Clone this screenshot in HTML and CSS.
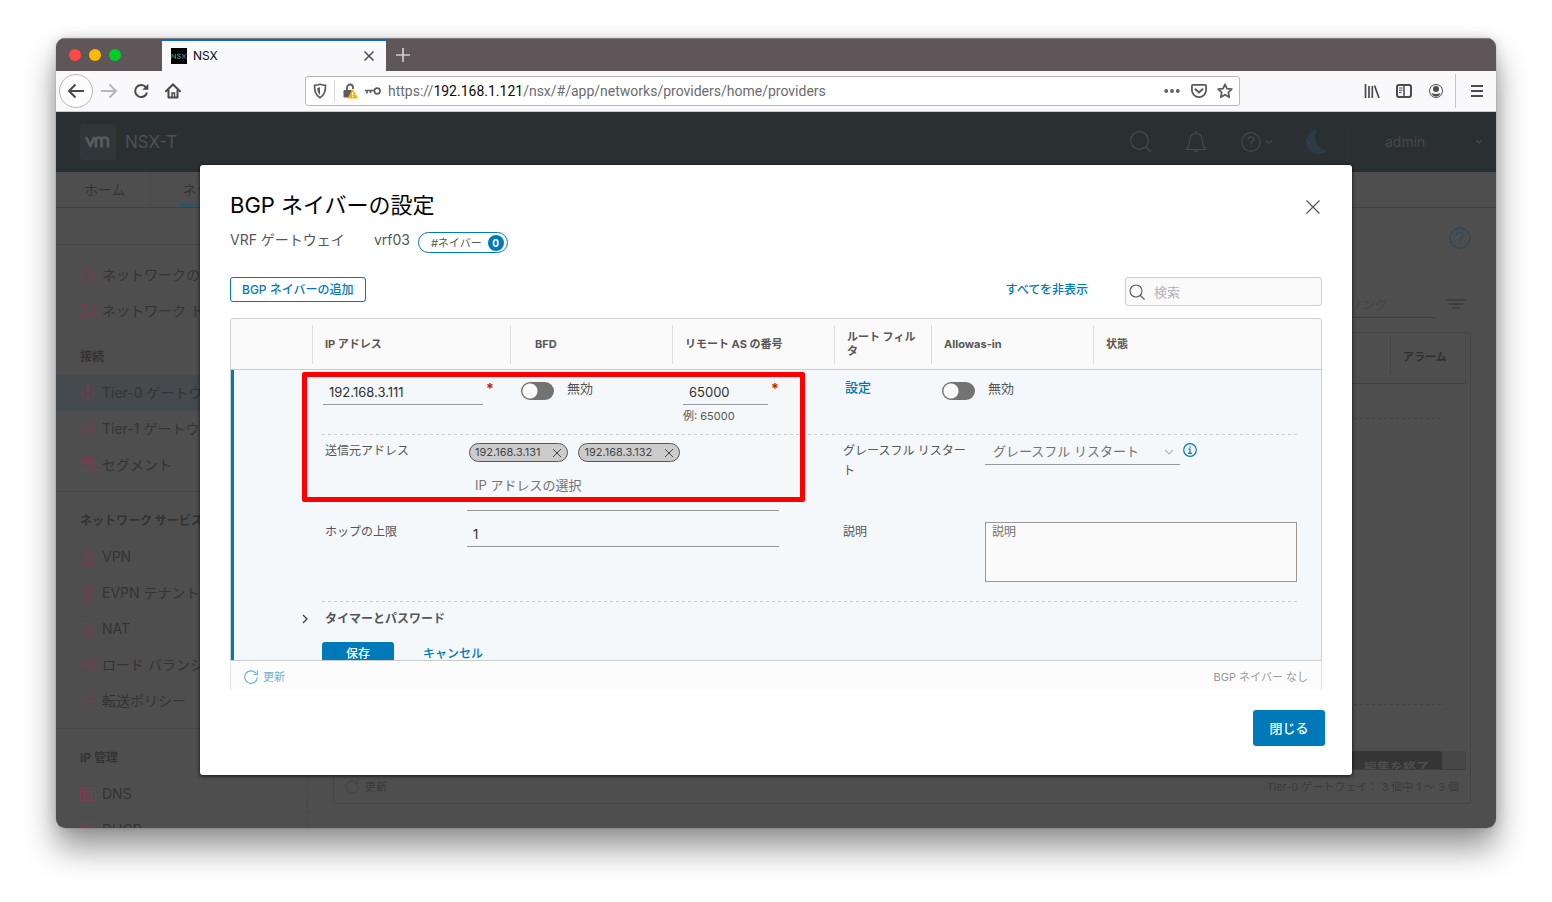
FILE: index.html
```html
<!DOCTYPE html>
<html lang="ja">
<head>
<meta charset="utf-8">
<title>NSX</title>
<link rel="stylesheet" href="styles.css">
</head>
<body>
<div class="window">
  <div class="titlebar">
    <div class="lights"><span class="light red"></span><span class="light yellow"></span><span class="light green"></span></div>
    <div class="browser-tab">
      <svg class="favicon" width="16" height="16" viewBox="0 0 16 16" aria-hidden="true"><rect width="16" height="16"/><g fill="none" stroke-width="1"><path stroke="#2f8f6a" d="M1 10.500V6l3.500 4.500V6"/><path stroke="#3fa7a0" d="M9.500 6.500C8 5.500 6.300 6.200 6.500 7.300c.2 1 2.900.7 3 2 .1 1.200-2 1.600-3.400.6"/><path stroke="#3c7fb5" d="M11 6l4 4.700M15 6l-4 4.700"/></g></svg>
      <span class="tab-title">NSX</span>
      <button class="icon-btn" aria-label="タブを閉じる"><svg width="12" height="12" viewBox="0 0 12 12"><path d="M1.500 1.500l9 9M10.500 1.500l-9 9" stroke="#4a4a4f" stroke-width="1.500" fill="none"/></svg></button>
    </div>
    <button class="icon-btn new-tab" aria-label="新しいタブ"><svg width="16" height="16" viewBox="0 0 16 16"><path d="M8 1v14M1 8h14" stroke="#d0cdce" stroke-width="1.700"/></svg></button>
  </div>

  <div class="toolbar">
    <button class="icon-btn back" aria-label="戻る"><svg width="18" height="16" viewBox="0 0 18 16"><path d="M17 8H2M8.500 1.500L2 8l6.500 6.500" stroke="#4a4a4f" stroke-width="2" fill="none"/></svg></button>
    <button class="icon-btn nav" aria-label="進む"><svg width="18" height="16" viewBox="0 0 18 16"><path d="M1 8h15M9.500 1.500L16 8l-6.500 6.500" stroke="#b7b7ba" stroke-width="2" fill="none"/></svg></button>
    <button class="icon-btn nav" aria-label="再読み込み"><svg width="16" height="16" viewBox="0 0 16 16"><path d="M13 4.500A6 6 0 1 0 14 9.500" stroke="#4a4a4f" stroke-width="2" fill="none"/><path d="M15.300.8v6h-6z" fill="#4a4a4f"/></svg></button>
    <button class="icon-btn nav" aria-label="ホーム"><svg width="16" height="16" viewBox="0 0 16 16" fill="none" stroke="#4a4a4f" stroke-width="2"><path d="M1 8.300L8 1.500l7 6.800" stroke-linecap="round"/><path d="M3.500 7v7.500h9V7" stroke-linejoin="round"/><path d="M7 14v-4h2.500v4" stroke-width="1.500"/></svg></button>

    <div class="urlbar">
      <svg width="14" height="16" viewBox="0 0 14 16"><path d="M7 1.300c2 .8 3.700 1 5.500 1C12.700 9 11 12.500 7 14.800 3 12.500 1.300 9 1.500 2.300c1.800 0 3.500-.2 5.500-1z" fill="none" stroke="#5c5c61" stroke-width="1.700"/><path d="M7 4v8c-1.800-1.500-2.700-3.600-2.800-7 1-.1 1.900-.4 2.800-1z" fill="#5c5c61"/></svg>
      <span class="url-sep"></span>
      <svg width="16" height="16" viewBox="0 0 16 16"><path d="M5 8V4.500a3 3 0 0 1 6 0V6" fill="none" stroke="#5c5c61" stroke-width="1.800"/><rect x="1.500" y="7" width="8.500" height="7.500" rx="1.200" fill="#5c5c61"/><path d="M10.700 6L16 15.500H5.400z" fill="#ffb100"/><path d="M10.700 9.200v3M10.700 13v1.300" stroke="#fff" stroke-width="1.200"/></svg>
      <svg width="16" height="16" viewBox="0 0 16 16" fill="none" stroke="#5c5c61" stroke-width="1.700"><circle cx="12.200" cy="8" r="2.800"/><path d="M9.400 7.500H0M2 8v2.500M5.500 8v2"/></svg>
      <p class="url">https://<b>192.168.1.121</b>/nsx/#/app/networks/providers/home/providers</p>
      <svg width="18" height="16" viewBox="0 0 18 16" fill="#5c5c61"><circle cx="3.200" cy="8" r="1.900"/><circle cx="9" cy="8" r="1.900"/><circle cx="14.800" cy="8" r="1.900"/></svg>
      <svg width="16" height="16" viewBox="0 0 16 16" fill="none" stroke="#5c5c61" stroke-width="1.800"><path d="M2 1.900h12q1.100 0 1.100 1.100v4a7.100 7.100 0 0 1-14.200 0V3Q.9 1.900 2 1.900z"/><path d="M4.500 6.200L8 9.500l3.500-3.300" stroke-linecap="round" stroke-width="2"/></svg>
      <svg width="16" height="16" viewBox="0 0 16 16"><path d="M8 1.300l2 4.300 4.800.6-3.500 3.200.9 4.700L8 11.800l-4.200 2.300.9-4.700L1.200 6.200 6 5.600z" fill="none" stroke="#5c5c61" stroke-width="1.800" stroke-linejoin="round"/></svg>
    </div>

    <button class="icon-btn nav" aria-label="ライブラリ"><svg width="16" height="16" viewBox="0 0 16 16" stroke="#4a4a4f" stroke-width="1.700"><path d="M1.500 1v14M5 3v12M8.300 3v12M10.500 2.500L15 15"/></svg></button>
    <button class="icon-btn nav" aria-label="サイドバー"><svg width="16" height="16" viewBox="0 0 16 16" fill="none" stroke="#4a4a4f"><rect x="1" y="2" width="14" height="12" rx="2" stroke-width="2"/><path d="M8 2v12" stroke-width="1.500"/><path d="M3 5h3.500M3 7.200h3.500M3 9.400h2.500"/></svg></button>
    <button class="icon-btn nav" aria-label="アカウント"><svg width="16" height="16" viewBox="0 0 16 16"><circle cx="8" cy="8" r="6.500" fill="none" stroke="#4a4a4f" stroke-width="1"/><circle cx="8" cy="6" r="3" fill="#4a4a4f"/><path d="M3.300 10q4.700 2 9.400 0-1.500 3.500-4.700 3.500T3.300 10z" fill="#4a4a4f"/></svg></button>
    <span class="bar-sep"></span>
    <button class="icon-btn menu" aria-label="メニュー"><svg width="14" height="14" viewBox="0 0 14 14"><path d="M1 2h12M1 7h12M1 12h12" stroke="#4a4a4f" stroke-width="2"/></svg></button>
  </div>

  <div class="app">
    <header class="app-header">
      <svg width="36" height="36" viewBox="0 0 36 36" aria-label="vm"><rect width="36" height="36" rx="3" fill="#30363a"/><path d="M6.500 14l3.800 8L14 14M16 22.500V16q.2-2.500 2.700-2.500 2.800 0 2.800 2.700v6.300M21.500 16.200q.2-2.700 3-2.700 3.500 0 3.500 2.700v6.300" fill="none" stroke="#575b5d" stroke-width="2.700" stroke-linecap="round" stroke-linejoin="round"/></svg>
      <span class="product">NSX-T</span>
      <div class="header-tools">
        <svg width="24" height="24" viewBox="0 0 24 24" fill="none" stroke="#464a4c" stroke-width="1.200"><circle cx="10.500" cy="10.500" r="8.800"/><path d="M17 17l5 5"/></svg>
        <svg width="24" height="24" viewBox="0 0 24 24" fill="none" stroke="#464a4c" stroke-width="1.200"><path d="M2.500 19.500h19q-3-3-3-7.500 0-8.500-6.500-8.500T5.500 12q0 4.500-3 7.500zM12 3.500V1"/><path d="M10 20.500q2 2.500 4 0" fill="#464a4c"/></svg>
        <svg width="34" height="24" viewBox="0 0 34 24" fill="none" stroke="#464a4c" stroke-width="1.200"><circle cx="12" cy="12" r="9.300"/><path d="M9 9.700q.2-2.900 3-2.900t3 2.500c0 2-3 2-3 4.500M12 15.500V17M27 10.500l3 3 3-3"/></svg>
        <svg width="24" height="24" viewBox="0 0 24 24"><path d="M13 0A12 12 0 1 0 23 20 13 13 0 0 1 13 0z" fill="#2c3c47"/></svg>
      </div>
      <div class="user"><span>admin</span><svg width="8" height="6" viewBox="0 0 8 6"><path d="M1 1l3 3 3-3" fill="none" stroke="#46494b" stroke-width="1.300"/></svg></div>
    </header>

    <nav class="tabs"><a class="tab" href="#home">ホーム</a><a class="tab active" href="#network">ネットワーク</a></nav>

    <div class="workspace">
      <nav class="sidebar">
        <div class="side-group first">
          <a class="side-item" href="#n"><svg class="side-icon" viewBox="0 0 16 16"><path d="M3 14a7 7 0 1 1 10 0zM8 10l3-4M3 8h1M8 3.500v1M12 8h1"/><circle cx="8" cy="10" r="1"/></svg>ネットワークの概要</a>
          <a class="side-item" href="#n"><svg class="side-icon" viewBox="0 0 16 16"><path d="M5 13l-4 2V2l4-1 5 2 5-1v12M5 1v12l2 .5M10 3v2"/><circle cx="9.500" cy="9" r="3"/><path d="M11.500 11.500L15 15"/></svg>ネットワーク トポロジ</a>
          <h2 class="side-title spaced">接続</h2>
          <a class="side-item selected" href="#n"><svg class="side-icon" viewBox="0 0 16 16"><circle cx="8" cy="8" r="7"/><circle cx="8" cy="8" r="2"/><path d="M8 1.500v3M8 11.500v3M2 8h2.500M11.500 8H14M6.500 3L8 4.500 9.500 3M6.500 13L8 11.500 9.500 13"/></svg>Tier-0 ゲートウェイ</a>
          <a class="side-item" href="#n"><svg class="side-icon" viewBox="0 0 16 16"><circle cx="8" cy="8" r="7"/><path d="M7 6.500L8 6v4M8 1.500v2.500M8 12v2.500M2 8h3M11 8h3M4 7v2M12 7v2"/></svg>Tier-1 ゲートウェイ</a>
          <a class="side-item" href="#n"><svg class="side-icon" viewBox="0 0 16 16"><path d="M4 1.500h8M2 3.500h12M1.500 6h13v8.500h-13zM4 9h7l-1.500-1.500M12 12H5l1.500 1.500"/></svg>セグメント</a>
        </div>
        <div class="side-group">
          <h2 class="side-title">ネットワーク サービス</h2>
          <a class="side-item" href="#n"><svg class="side-icon" viewBox="0 0 16 16"><circle cx="8" cy="7" r="6.500"/><path d="M5 6.500h6V10H5zM6.300 6.500v-2q1.700-2 3.400 0v2M8 7.500V9M3 15.500h10"/></svg>VPN</a>
          <a class="side-item" href="#n"><svg class="side-icon" viewBox="0 0 16 16"><circle cx="8" cy="7" r="6"/><path d="M3.500 4L12 11M12.500 3.500L4 11M4 11q0-6 8.500-7.500M3.500 4q6 0 8.500 7M4 15.500h9"/></svg>EVPN テナント</a>
          <a class="side-item" href="#n"><svg class="side-icon" viewBox="0 0 16 16"><path d="M0 2.500h2M4 2.500h5v11H4M0 13.500h2M0 8h2M4 8h11M12.500 5.500L15 8l-2.500 2.500"/></svg>NAT</a>
          <a class="side-item" href="#n"><svg class="side-icon" viewBox="0 0 16 16"><circle cx="3.500" cy="8" r="2.500"/><circle cx="13" cy="3" r="1.500"/><circle cx="13" cy="8" r="1.500"/><circle cx="13" cy="13" r="1.500"/><path d="M6 7l5.500-3.500M6 8h5.500M6 9l5.500 3.500"/></svg>ロード バランシング</a>
          <a class="side-item" href="#n"><svg class="side-icon" viewBox="0 0 16 16"><path d="M10 4L8 1.500 1.500 8 8 14.500l2-2.500M8 5v6M8 8h7M12.500 5.500L15 8l-2.500 2.500"/></svg>転送ポリシー</a>
        </div>
        <div class="side-group">
          <h2 class="side-title">IP 管理</h2>
          <a class="side-item" href="#n"><svg class="side-icon" viewBox="0 0 16 16"><path d="M.5 1.500h15v13H.5zM4.500 1.500v13M11.500 1.500v13M4.500 4h7M4.500 6h7M4.500 8h7M4.500 10h7M4.500 12h7M2 5h1M2 8h1M2 11h1M13 5h1M13 8h1M13 11h1"/></svg>DNS</a>
          <a class="side-item" href="#n"><svg class="side-icon" viewBox="0 0 16 16"><rect x=".5" y="1.500" width="15" height="12" rx="1.500"/><path d="M3 5h10v5H3z"/></svg>DHCP</a>
        </div>
      </nav>
      <main class="main">
        <div class="help-row"><svg width="22" height="22" viewBox="0 0 22 22" fill="none" stroke="#2c4a5a" stroke-width="1.400"><circle cx="11" cy="11" r="10"/><path d="M7.700 8.500Q8 5.500 11 5.500t3.200 2.700C14.200 10.500 11 10.500 11 13.500M11 15v1.500"/></svg></div>
        <div class="filter-row">
          <input class="filter" type="text" aria-label="フィルタ" placeholder="名前、パス、その他でフィルタリング">
          <svg width="20" height="12" viewBox="0 0 20 12"><path d="M0 2h20M3 6h14M6 10h8" stroke="#3a3a3a" stroke-width="1.700"/></svg>
        </div>
        <div class="back-grid">
          <div class="back-head"><span>アラーム</span></div>
          <div class="back-body">
            <div class="back-dash"></div>
            <div class="back-edit"><div class="back-dash"></div><div class="back-actions"><button class="back-btn">編集を終了</button></div></div>
          </div>
          <div class="back-foot"><span class="back-refresh"><svg width="14" height="14" viewBox="0 0 14 14"><path d="M13 7A6 6 0 1 1 11 2.500M12.500 0v4H9" fill="none" stroke="#3b4347"/></svg>更新</span><span>Tier-0 ゲートウェイ： 3 個中 1 ～ 3 個</span></div>
        </div>
      </main>
    </div>

    <div class="backdrop">
      <section class="modal" role="dialog" aria-labelledby="dlg-title">
        <div class="modal-head">
          <h1 id="dlg-title">BGP ネイバーの設定</h1>
          <button class="icon-btn" aria-label="閉じる"><svg width="18" height="18" viewBox="0 0 18 18"><path d="M2.500 2.500l13 13M15.500 2.500l-13 13" stroke="#565656" stroke-width="1.200"/></svg></button>
        </div>
        <div class="context"><span>VRF ゲートウェイ</span><span class="vrf">vrf03</span><span class="pill">#ネイバー<b>0</b></span></div>
        <div class="actions">
          <button class="btn outline">BGP ネイバーの追加</button>
          <a class="collapse" href="#collapse">すべてを非表示</a>
          <label class="search"><svg width="16" height="16" viewBox="0 0 16 16" fill="none" stroke="#565656" stroke-width="1.100"><circle cx="7" cy="7" r="6"/><path d="M11.500 11.500l4 4"/></svg><input type="search" aria-label="検索" placeholder="検索"></label>
        </div>

        <div class="grid">
          <div class="grid-scroll">
            <table class="neighbors">
              <colgroup><col class="c-tool"><col class="c-ip"><col class="c-mid"><col class="c-mid"><col class="c-route"><col class="c-mid"><col></colgroup>
              <thead><tr>
                <th aria-label="操作"></th>
                <th><div class="th">IP アドレス</div></th>
                <th><div class="th indent">BFD</div></th>
                <th><div class="th">リモート AS の番号</div></th>
                <th><div class="th">ルート フィルタ</div></th>
                <th><div class="th">Allowas-in</div></th>
                <th><div class="th">状態</div></th>
              </tr></thead>
              <tbody>
                <tr class="edit-row">
                  <td class="mark"></td>
                  <td><div class="field"><input class="line-input" aria-label="IP アドレス" value="192.168.3.111"><span class="req">*</span></div></td>
                  <td><label class="switch"><input type="checkbox"><span>無効</span></label></td>
                  <td><div class="field"><input class="line-input short" aria-label="リモート AS の番号" value="65000"><span class="req">*</span></div><p class="hint">例: 65000</p></td>
                  <td><a class="set-link" href="#set">設定</a></td>
                  <td><label class="switch"><input type="checkbox"><span>無効</span></label></td>
                  <td></td>
                </tr>
                <tr><td class="mark details-cell" colspan="7">
                  <div class="details">
                    <label for="src">送信元アドレス</label>
                    <div class="source">
                      <div class="tags">
                        <span class="tag">192.168.3.131<button aria-label="削除"><svg width="10" height="10" viewBox="0 0 10 10"><path d="M1 1l8 8M9 1L1 9" stroke="#454545"/></svg></button></span>
                        <span class="tag">192.168.3.132<button aria-label="削除"><svg width="10" height="10" viewBox="0 0 10 10"><path d="M1 1l8 8M9 1L1 9" stroke="#454545"/></svg></button></span>
                      </div>
                      <input id="src" class="source-input" placeholder="IP アドレスの選択">
                    </div>
                    <label for="gr" class="second">グレースフル リスタート</label>
                    <div class="restart">
                      <div class="select-wrap"><select id="gr"><option>グレースフル リスタート</option></select><svg width="10" height="6" viewBox="0 0 10 6"><path d="M1 1l4 4 4-4" fill="none" stroke="#a9b6be" stroke-width="1.200"/></svg></div>
                      <svg width="14" height="14" viewBox="0 0 14 14" fill="none" stroke="#0079b8" stroke-width="1.200"><circle cx="7" cy="7" r="6.300"/><path d="M5.300 6H7v4.300M5 10.300h4M7 3.200v1.400"/></svg>
                    </div>
                    <label for="hop">ホップの上限</label>
                    <div><input id="hop" class="hop" value="1"></div>
                    <label for="desc" class="second">説明</label>
                    <textarea id="desc" placeholder="説明"></textarea>
                  </div>
                  <div class="more">
                    <button class="expander"><svg width="8" height="10" viewBox="0 0 8 10"><path d="M2 1l4 4-4 4" fill="none" stroke="#314351" stroke-width="1.300"/></svg><span>タイマーとパスワード</span></button>
                    <div class="row-actions"><button class="btn primary small">保存</button><button class="btn link">キャンセル</button></div>
                  </div>
                </td></tr>
              </tbody>
            </table>
          </div>
          <div class="grid-foot"><button class="refresh"><svg width="14" height="14" viewBox="0 0 14 14"><path d="M13.300 7.500A6.300 6.300 0 1 1 11.800 3M13.300.5v3.800H9.600" fill="none" stroke="#6fb3d9" stroke-width="1.200"/></svg>更新</button><span>BGP ネイバー なし</span></div>
          <div class="highlight"></div>
        </div>
        <div class="modal-foot"><button class="btn primary">閉じる</button></div>
      </section>
    </div>
  </div>
</div>
</body>
</html>
```

FILE: styles.css
```css
* { box-sizing: border-box; }
html, body { height: 100%; }
body {
  margin: 0;
  padding: 38px 56px 74px;
  background: #fff;
  font-family: Inter, "Noto Sans CJK JP", sans-serif;
  font-size: 13px;
  line-height: 20px;
  color: #565656;
  overflow: hidden;
}
h1, h2, p { margin: 0; font-weight: 400; }
svg { display: block; flex: none; }
a { text-decoration: none; color: inherit; }
button, input, select, textarea { font: inherit; color: inherit; margin: 0; padding: 0; border: 0; background: none; border-radius: 0; outline: 0; }
.icon-btn { display: flex; align-items: center; justify-content: center; flex: none; }

.window {
  height: 100%;
  display: flex;
  flex-direction: column;
  border-radius: 9px;
  overflow: hidden;
  box-shadow: 0 0 1px rgba(0,0,0,.5), 0 20px 32px rgba(0,0,0,.42), 0 0 14px rgba(0,0,0,.14);
}
.titlebar { display: flex; height: 33px; flex: none; background: #5e5658; border-top: 1px solid #837d7f; }
.lights { display: flex; align-items: center; gap: 8px; width: 106px; padding-left: 13px; }
.light { width: 12px; height: 12px; border-radius: 50%; }
.red { background: #fc4943; }
.yellow { background: #fdb900; }
.green { background: #00ce26; }
.browser-tab { display: flex; align-items: center; gap: 6px; width: 224px; padding: 0 11px 1px 9px; background: #f9f9fb; border-top: 2px solid #0a63dc; color: #0c0c0d; font-size: 12px; }
.tab-title { flex: 1; }
.new-tab { width: 34px; }

.toolbar { display: flex; align-items: center; height: 41px; flex: none; padding: 0 7px 0 3px; background: #f9f9fb; border-bottom: 1px solid #ccc; }
.back { width: 34px; height: 34px; border: 1px solid #b7b7ba; border-radius: 50%; background: #fcfcfd; }
.nav { width: 32px; height: 32px; }
.urlbar { flex: 1; display: flex; align-items: center; gap: 7px; height: 30px; margin: 0 116px; padding: 0 6px 0 7px; border: 1px solid #b8b8bb; border-radius: 3px; background: #fff; }
.url { flex: 1; font-family: Roboto, sans-serif; font-size: 14px; color: #6b6b70; white-space: nowrap; }
.url b { font-weight: 400; color: #0c0c0d; }
.url ~ svg { margin-left: 3px; }
.url-sep { width: 1px; height: 22px; background: #d7d7db; }
.bar-sep { width: 1px; height: 34px; margin-left: 3px; background: #c4c4c8; }
.menu { width: 24px; height: 32px; margin-left: 9px; }

.app { position: relative; flex: 1; min-height: 0; display: flex; flex-direction: column; background: #4e4e4e; color: #343434; overflow: hidden; }
.app-header { display: flex; align-items: center; flex: none; height: 60px; padding-left: 24px; background: #2a2f32; color: #4d5153; }
.product { margin-left: 9px; font-size: 17px; }
.header-tools { display: flex; align-items: center; margin-left: auto; gap: 31px; padding-right: 18px; }
.user { display: flex; align-items: center; justify-content: space-between; width: 150px; height: 40px; padding: 0 13px 0 38px; border-left: 1px solid #2d3235; font-size: 14px; color: #46494b; }
.tabs { display: flex; flex: none; height: 36px; border-bottom: 1px solid #414141; font-size: 14px; line-height: 35px; }
.tab { margin-left: 28px; padding-right: 24px; }
.tab + .tab { margin-left: 28px; padding: 0 4px; border-bottom: 3px solid #2e5366; }
.tab:first-child { border-right: 1px solid #494949; }

.workspace { display: flex; flex: 1; min-height: 0; }
.sidebar { flex: none; width: 252px; padding-top: 36px; border-right: 1px dashed #464646; }
.side-group { padding: 11px 0 9px; border-top: 1px solid #464646; }
.side-group.first { padding: 12px 0 8px; }
.side-title { height: 36px; padding-left: 24px; font-size: 12px; line-height: 35px; font-weight: 700; color: #333; white-space: nowrap; }
.side-title.spaced { margin-top: 10px; }
.side-item { display: flex; align-items: center; gap: 6px; height: 36px; padding-left: 24px; font-size: 14px; white-space: nowrap; overflow: hidden; }
.side-item.selected { background: #444a4e; }
.side-icon { width: 16px; height: 16px; fill: none; stroke: #7a3c4f; stroke-width: 1; }

.main { flex: 1; min-width: 0; display: flex; flex-direction: column; padding: 19px 25px 24px; }
.help-row { display: flex; justify-content: flex-end; }
.filter-row { display: flex; align-items: center; justify-content: flex-end; gap: 11px; padding: 41px 5px 0 0; }
.filter { width: 280px; height: 28px; padding-left: 12px; border-bottom: 1px solid #3e3e3e; }
.filter::placeholder { color: #454545; opacity: 1; }
.back-grid { flex: 1; display: flex; flex-direction: column; margin-top: 14px; border: 1px solid #444; border-radius: 3px; }
.back-head { display: flex; justify-content: flex-end; height: 51px; margin-right: 4px; padding: 3px 0 8px; border-bottom: 1px solid #404040; border-right: 1px solid #494949; }
.back-head span { width: 75px; padding-left: 12px; border-left: 1px solid #454545; font-size: 11px; line-height: 42px; font-weight: 700; color: #303030; }
.back-body { flex: 1; display: flex; flex-direction: column; justify-content: space-between; margin-right: 4px; padding-top: 34px; overflow: hidden; border-bottom: 1px solid #3d3d3d; }
.back-dash { height: 1px; margin-right: 24px; background: repeating-linear-gradient(90deg, #424242 0 3px, transparent 3px 6px); }
.back-actions { display: flex; justify-content: flex-end; height: 18px; margin-top: 46px; padding-right: 24px; background: #474747; overflow: hidden; }
.back-btn { height: 32px; padding: 0 13px; border-radius: 3px; background: #363636; color: #4d4d4d; font-weight: 700; }
.back-foot { display: flex; justify-content: space-between; padding: 7px 11px 6px; font-size: 11px; color: #3b3b3b; }
.back-refresh { display: flex; align-items: center; gap: 6px; }

.backdrop { position: absolute; inset: 0; display: flex; justify-content: center; padding: 53px 0; }
.modal { width: 80%; display: flex; flex-direction: column; padding: 27px 30px 29px; border-radius: 3px; background: #fff; color: #565656; box-shadow: 0 1px 3px 1px rgba(0,0,0,.5); }
.modal-head { display: flex; justify-content: space-between; height: 30px; }
.modal-head h1 { font-size: 22px; line-height: 26px; color: #000; }
.context { display: flex; align-items: center; height: 34px; padding-top: 2px; font-size: 14px; }
.vrf { margin-left: 29px; }
.pill { display: flex; align-items: center; gap: 6px; height: 21px; margin: 5px 0 0 8px; padding: 0 3px 0 12px; border: 1px solid #0079b8; border-radius: 11px; font-size: 11px; line-height: 18px; }
.pill b { width: 16px; height: 16px; border-radius: 50%; background: #0079b8; color: #fff; font-size: 10px; line-height: 16px; text-align: center; }
.actions { display: flex; align-items: flex-start; margin-top: 21px; height: 41px; }
.btn { border-radius: 3px; font-weight: 500; text-align: center; }
.outline { height: 25px; padding: 0 11px; border: 1px solid #0079b8; color: #0079b8; font-size: 12px; line-height: 22px; }
.collapse { margin-left: auto; color: #0079b8; font-size: 12px; line-height: 25px; font-weight: 500; }
.search { display: flex; align-items: center; gap: 9px; width: 197px; height: 29px; margin-left: 37px; padding: 0 3px; border: 1px solid #ccc; border-radius: 3px; background: #fafafa; }
.search input { flex: 1; min-width: 0; height: 20px; }
.search input::placeholder { color: #b3b3b3; opacity: 1; }

.grid { position: relative; flex: 1; min-height: 0; display: flex; flex-direction: column; }
.grid-scroll { flex: 1; min-height: 0; overflow: hidden; border: 1px solid #ccc; border-radius: 3px 3px 0 0; background: #f4f8fb; }
.neighbors { width: 100%; table-layout: fixed; border-collapse: separate; border-spacing: 0; }
.c-tool { width: 81px; }
.c-ip { width: 198px; }
.c-mid { width: 162px; }
.c-route { width: 97px; }
th { height: 51px; padding: 0; background: #fafafa; border-bottom: 1px solid #ccc; font-size: 11px; line-height: 14px; text-align: left; }
.th { display: flex; align-items: center; height: 39px; padding: 0 12px; border-left: 1px solid #ddd; }
.th.indent { padding-left: 24px; }
td { padding: 0 0 0 11px; vertical-align: top; }
.edit-row { height: 64px; }
td.mark { padding-left: 0; border-left: 3px solid #0079b8; }
.field { display: flex; gap: 3px; height: 35px; }
.line-input { width: 160px; height: 25px; margin-top: 10px; padding-left: 6px; border-bottom: 1px solid #999; color: #313131; }
.line-input.short { width: 85px; }
.req { padding-top: 9px; color: #c92100; font-size: 14px; line-height: 20px; font-weight: 700; }
.hint { font-size: 11px; line-height: 22px; }
.switch { display: flex; align-items: flex-start; gap: 13px; height: 38px; line-height: 36px; }
.switch input { appearance: none; flex: none; width: 33px; height: 18px; margin-top: 12px; border-radius: 9px; background: radial-gradient(circle at 9px 9px, #fafafa 7px, transparent 8px) #737373; }
.set-link { color: #0079b8; font-weight: 500; line-height: 34px; }

.details { display: grid; grid-template-columns: 142px minmax(0, 1fr) 206px minmax(0, 1fr); grid-template-rows: 81px 79px; margin: 0 24px 0 88px; padding: 7px 0 1px 3px; font-size: 12px; background: repeating-linear-gradient(90deg, #ccc 0 3px, transparent 3px 6px) top / 100% 1px no-repeat, repeating-linear-gradient(90deg, #ccc 0 3px, transparent 3px 6px) bottom / 100% 1px no-repeat; }
.details > label { padding-right: 18px; }
.details > .second { padding-left: 64px; }
.source { height: 70px; border-bottom: 1px solid #999; }
.tags { display: flex; gap: 10px; padding: 2px 0 0 2px; }
.tag { display: flex; align-items: center; gap: 12px; height: 19px; padding: 0 5px; border: 1px solid #565656; border-radius: 10px; background: #ccc; font-size: 11px; line-height: 17px; color: #454545; }
.source-input { width: 100%; height: 24px; margin-top: 11px; padding-left: 8px; font-size: 13px; }
input::placeholder, textarea::placeholder { color: #737373; opacity: 1; }
.restart { display: flex; gap: 3px; }
.restart > svg { margin-top: 2px; }
.select-wrap { position: relative; width: 195px; height: 24px; border-bottom: 1px solid #999; font-size: 13px; }
.select-wrap select { appearance: none; width: 100%; height: 20px; padding-left: 8px; color: #737373; }
.select-wrap svg { position: absolute; right: 6px; top: 8px; }
.hop { width: 100%; height: 25px; padding-left: 6px; border-bottom: 1px solid #999; color: #313131; font-size: 13px; }
.details textarea { width: 100%; height: 60px; padding: 0 6px; border: 1px solid #999; background: #fafafa; resize: none; line-height: 18px; }
.more { padding: 5px 0 0 67px; }
.expander { display: flex; align-items: center; gap: 16px; height: 24px; font-size: 12px; font-weight: 700; }
.row-actions { display: flex; gap: 29px; margin: 11px 0 0 21px; font-size: 12px; line-height: 24px; }
.primary { height: 36px; width: 72px; background: #0079b8; color: #fff; font-size: 13px; }
.small { height: 24px; font-size: 12px; line-height: 24px; }
.link { color: #0079b8; font-size: 12px; }
.grid-foot { display: flex; align-items: center; justify-content: space-between; height: 29px; flex: none; padding: 3px 13px 0; border: 1px solid #e6e6e6; border-width: 0 1px; background: #fcfcfc; color: #9a9a9a; font-size: 11px; }
.refresh { display: flex; align-items: center; gap: 5px; color: #6fb3d9; }
.highlight { position: absolute; left: 72px; top: 54px; width: 503px; height: 130px; border: 5px solid #f00; border-radius: 2px; pointer-events: none; }
.modal-foot { display: flex; justify-content: flex-end; margin: 20px -3px 0 0; }
```
